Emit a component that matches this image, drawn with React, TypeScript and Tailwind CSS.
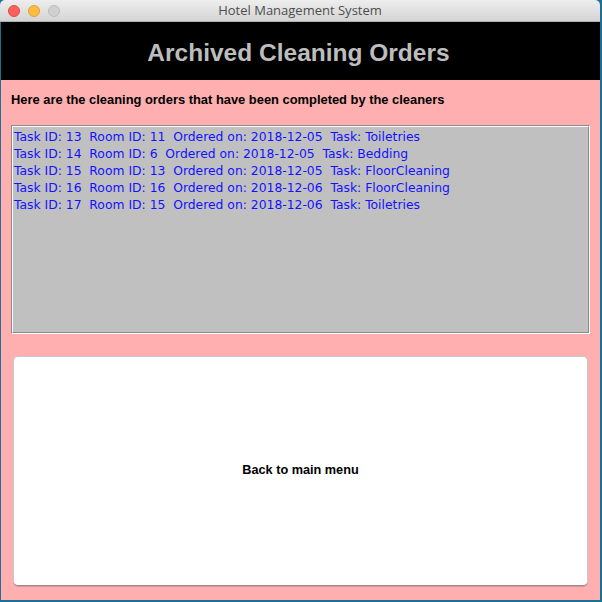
import React from "react";

const orders = [
  { task: 13, room: 11, date: "2018-12-05", kind: "Toiletries" },
  { task: 14, room: 6, date: "2018-12-05", kind: "Bedding" },
  { task: 15, room: 13, date: "2018-12-05", kind: "FloorCleaning" },
  { task: 16, room: 16, date: "2018-12-06", kind: "FloorCleaning" },
  { task: 17, room: 15, date: "2018-12-06", kind: "Toiletries" },
];

export default function App() {
  return (
    <div className="w-[602px] h-[602px] bg-[#1d6f95] flex flex-col pl-px pr-[2px] pb-[2px] font-['Liberation_Sans',sans-serif]">
      {/* title bar */}
      <div className="relative h-[22px] shrink-0 flex items-center justify-center bg-gradient-to-b from-[#eeeeee] to-[#d4d4d4] border-b border-[#b0b0b0] -ml-px rounded-t-[5px]">
        <div className="absolute left-[8px] top-[5px] flex gap-[8px]">
          <span className="w-[12px] h-[12px] rounded-full bg-[#fc605c] border border-[#de4a46]" />
          <span className="w-[12px] h-[12px] rounded-full bg-[#fdbc40] border border-[#dea235]" />
          <span className="w-[12px] h-[12px] rounded-full bg-[#d0d0d0] border border-[#bcbcbc]" />
        </div>
        <span className="text-[13px] text-[#4d4d4d] font-['Open_Sans',sans-serif] leading-none">Hotel Management System</span>
      </div>

      <div className="flex-1 flex flex-col bg-[#ffafaf]">
        <div className="h-[58px] bg-black flex items-center justify-center pt-[5px] pr-[4px]">
          <h1 className="text-[24.5px] font-bold text-[#bdbdbd] leading-none">Archived Cleaning Orders</h1>
        </div>

        <p className="mt-[12px] ml-[10px] text-[12.9px] font-bold text-black leading-[15px]">
          Here are the cleaning orders that have been completed by the cleaners
        </p>

        <div className="mt-[18px] mx-[10px] h-[209px] border border-t-[#8a8a8a] border-l-[#8a8a8a] border-b-white border-r-white">
          <div className="h-full border border-t-white border-l-white border-b-[#8a8a8a] border-r-[#8a8a8a] bg-[#c0c0c0] pt-[2px] pl-[1px] font-['DejaVu_Sans',sans-serif] text-[12.35px] leading-[17px] text-[#1212ff]">
            {orders.map((o) => (
              <div key={o.task} className="whitespace-pre">
                {`Task ID: ${o.task}  Room ID: ${o.room}  Ordered on: ${o.date}  Task: ${o.kind}`}
              </div>
            ))}
          </div>
        </div>

        <div className="mt-[22px] mx-[12px] mb-[14px] flex-1 flex items-center justify-center bg-white rounded-[5px] border border-[#c8c8c8] border-b-[#a08a8a] shadow-[0_1px_0_#d89696]">
          <span className="text-[12.7px] font-bold text-black">Back to main menu</span>
        </div>
      </div>
    </div>
  );
}
